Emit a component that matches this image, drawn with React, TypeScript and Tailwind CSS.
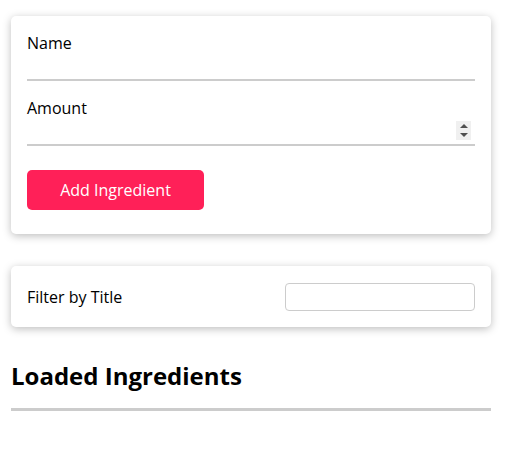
import { useState } from "react";

function Field({ label, number }: { label: string; number?: boolean }) {
  const [value, setValue] = useState("");
  return (
    <div className="relative">
      <label className="block text-base leading-[22px] text-black">{label}</label>
      <input
        type="text"
        value={value}
        onChange={(event) => setValue(event.target.value)}
        className="block h-[27px] w-full border-b-2 border-[#ccc] bg-white outline-none"
      />
      {number && (
        <div className="absolute right-[4px] bottom-[6px] flex h-[19px] w-[15px] flex-col items-center justify-center gap-[5px] bg-[#f0f0f0]">
          <span className="h-0 w-0 border-x-[4px] border-b-[4px] border-x-transparent border-b-[#505050]" />
          <span className="h-0 w-0 border-x-[4px] border-t-[4px] border-x-transparent border-t-[#505050]" />
        </div>
      )}
    </div>
  );
}

export default function App() {
  const [filter, setFilter] = useState("");

  return (
    <div className="min-h-screen bg-white pt-4 font-['Open_Sans',sans-serif] text-black">
      <div className="ml-[11px] w-[480px]">
        <form
          className="rounded-[5px] bg-white px-4 pt-4 pb-6 shadow-[0_2px_8px_rgba(0,0,0,0.26)]"
          onSubmit={(event) => event.preventDefault()}
        >
          <div className="flex flex-col gap-4">
            <Field label="Name" />
            <Field label="Amount" number />
          </div>
          <button
            type="submit"
            className="mt-6 h-10 w-[177px] rounded-[5px] bg-[#ff2058] text-base text-white"
          >
            Add Ingredient
          </button>
        </form>

        <div className="mt-8 flex h-[61px] items-center justify-between rounded-[5px] bg-white px-4 shadow-[0_2px_8px_rgba(0,0,0,0.26)]">
          <label className="text-base">Filter by Title</label>
          <input
            type="text"
            value={filter}
            onChange={(event) => setFilter(event.target.value)}
            className="h-[28px] w-[190px] rounded-[4px] border border-[#ccc] px-2 outline-none"
          />
        </div>

        <h2 className="mt-8 border-b-[3px] border-[#ccc] pb-4 text-2xl leading-[normal] font-bold">
          Loaded Ingredients
        </h2>
      </div>
    </div>
  );
}
